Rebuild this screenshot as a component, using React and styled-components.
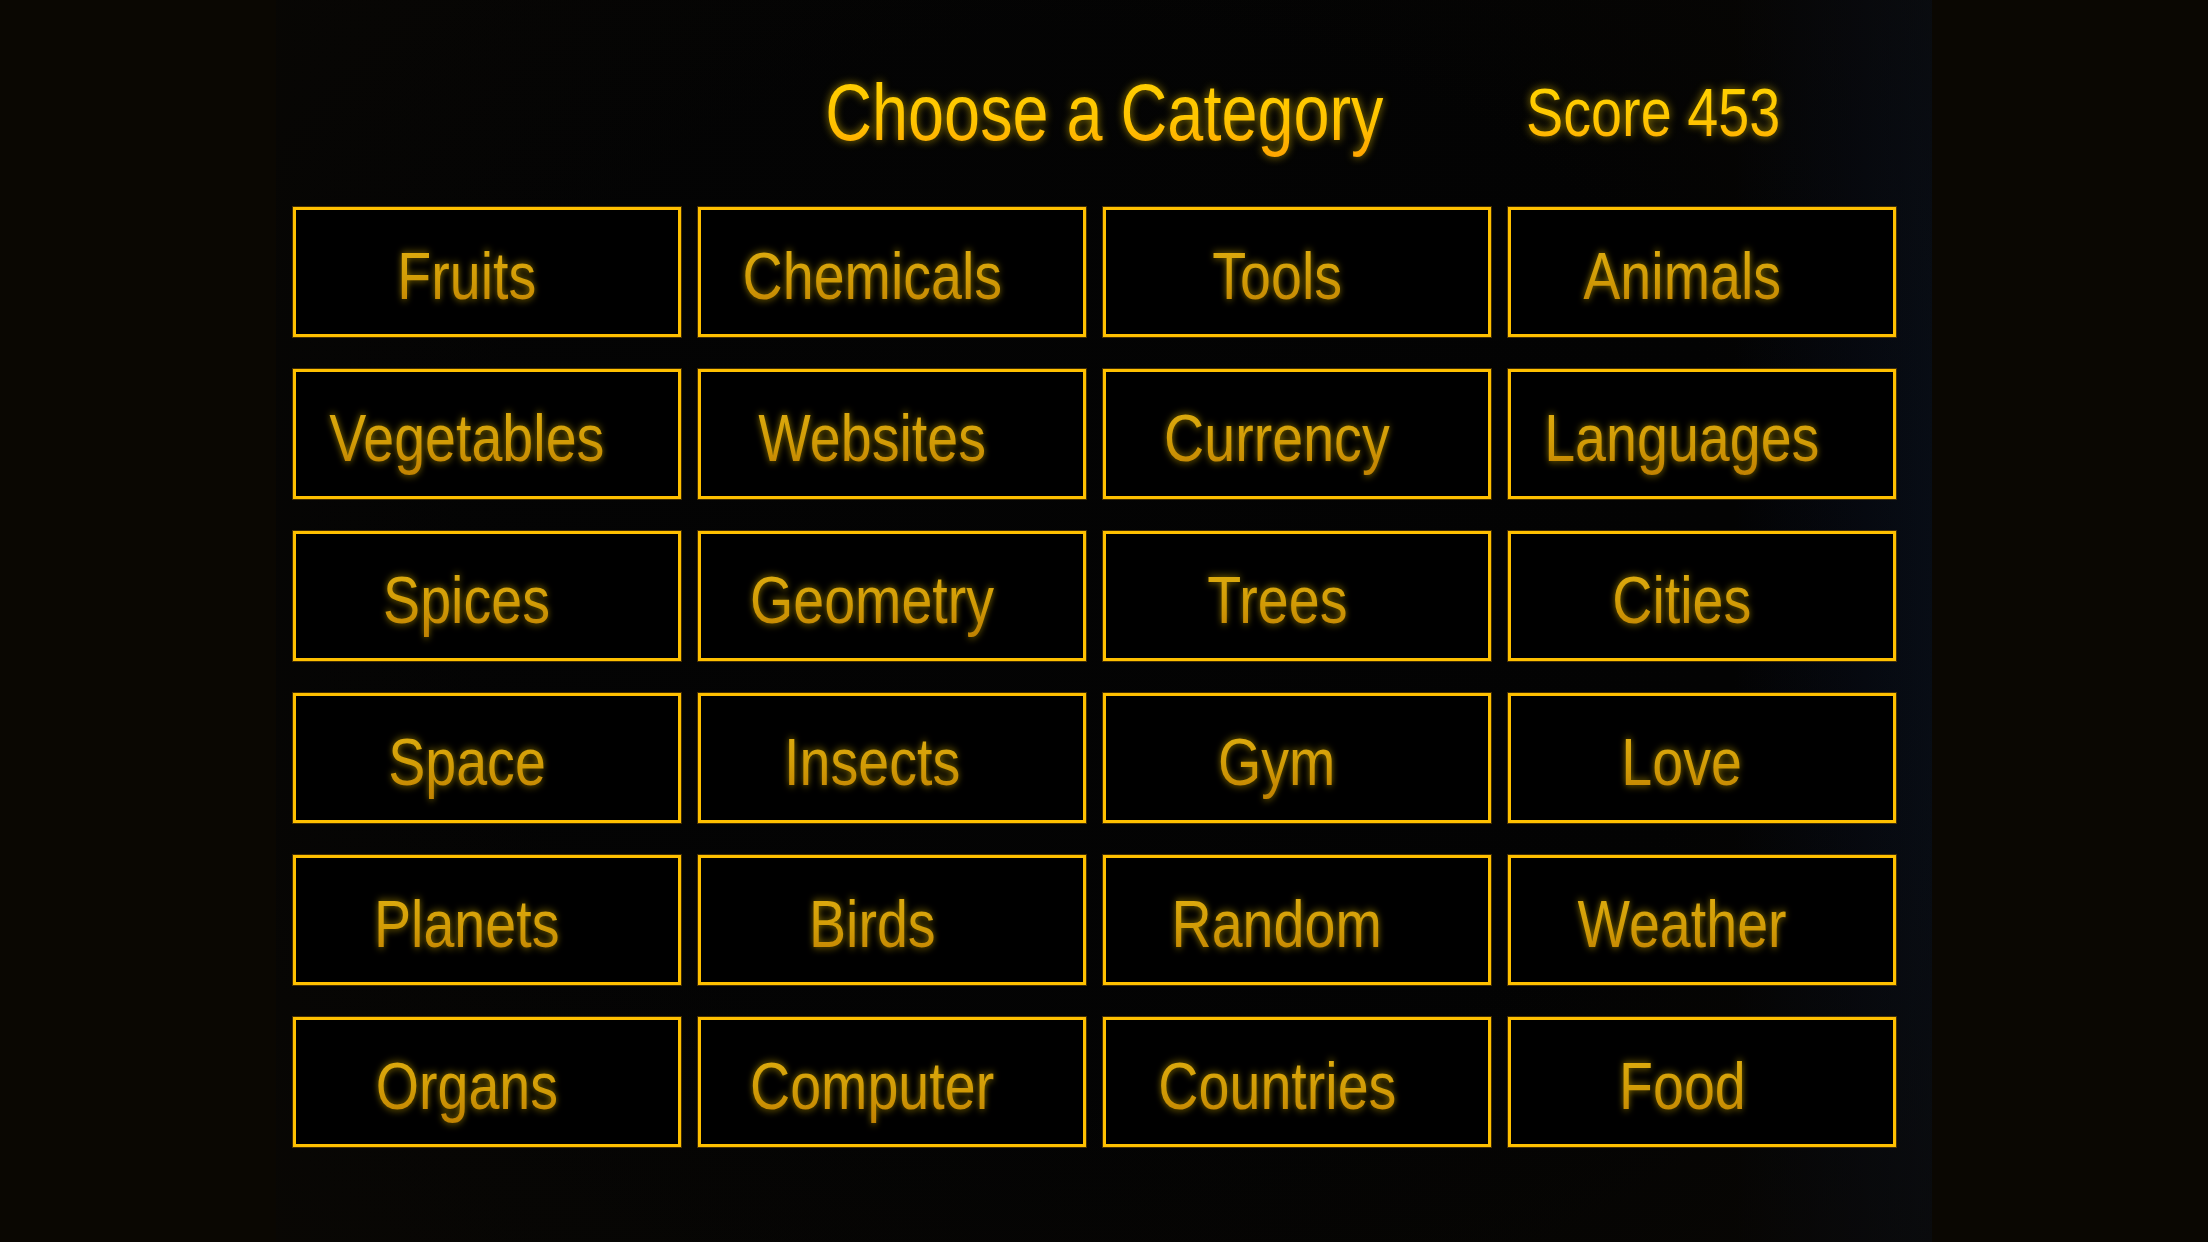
import React from "react";
import styled, { createGlobalStyle } from "styled-components";

const categories = [
    "Fruits", "Chemicals", "Tools", "Animals",
    "Vegetables", "Websites", "Currency", "Languages",
    "Spices", "Geometry", "Trees", "Cities",
    "Space", "Insects", "Gym", "Love",
    "Planets", "Birds", "Random", "Weather",
    "Organs", "Computer", "Countries", "Food",
];

const GlobalStyle = createGlobalStyle`
    html, body {
        margin: 0;
        padding: 0;
        background: #0a0702;
        font-family: "Liberation Sans", Arial, sans-serif;
    }
`;

const App = () => {
    return (
        <>
            <GlobalStyle />
            <Screen>
                <Stage>
                    <Header>
                        <span />
                        <Title>Choose a Category</Title>
                        <Score>Score 453</Score>
                    </Header>
                    <Grid>
                        {categories.map((name) => (
                            <Tile key={name}>
                                <Label>{name}</Label>
                            </Tile>
                        ))}
                    </Grid>
                </Stage>
            </Screen>
        </>
    );
};

const Screen = styled.div`
    width: 100vw;
    height: 100vh;
    display: flex;
    justify-content: center;
    background: #0a0702;
    overflow: hidden;
`;

const Stage = styled.div`
    width: 1656px;
    height: 1242px;
    box-sizing: border-box;
    padding: 0 36px 0 17px;
    background:
        radial-gradient(ellipse at 50% 45%, rgba(0, 0, 0, 0) 55%, rgba(12, 9, 4, 0.6) 100%),
        linear-gradient(to right, #040404 0%, #030303 88%, #050912 96%, #070e1a 100%);
`;

const Header = styled.div`
    display: grid;
    grid-template-columns: 1fr auto 1fr;
    align-items: start;
    padding-top: 73px;
    height: 134px;
    margin-left: -17px;
    margin-right: -36px;
`;

// gradient text: extra bottom padding keeps descenders inside the clipped background
const glowText = `
    line-height: 1;
    white-space: nowrap;
    padding-bottom: 0.22em;
    margin-bottom: -0.22em;
    -webkit-background-clip: text;
    background-clip: text;
    color: transparent;
`;

const Title = styled.h1`
    ${glowText}
    margin-top: 0;
    font-size: 79px;
    font-weight: normal;
    transform: scaleX(0.82);
    background-image: linear-gradient(to bottom, #ffd000 0%, #ffc400 50%, #ffab00 78%, #ffa000 100%);
    filter: drop-shadow(0 0 5px rgba(255, 214, 0, 0.6));
`;

const Score = styled.div`
    ${glowText}
    justify-self: start;
    margin-top: 5px;
    margin-left: 82px;
    font-size: 68px;
    transform: scaleX(0.82);
    transform-origin: left center;
    background-image: linear-gradient(to bottom, #ffd400 0%, #ffc600 50%, #ffae00 78%, #ffa400 100%);
    filter: drop-shadow(0 0 5px rgba(255, 214, 0, 0.6));
`;

const Grid = styled.div`
    display: grid;
    grid-template-columns: repeat(4, 388px);
    grid-auto-rows: 130px;
    column-gap: 17px;
    row-gap: 32px;
`;

const Tile = styled.div`
    box-sizing: border-box;
    display: flex;
    align-items: center;
    justify-content: center;
    padding: 6px 40px 0 0;
    background: #000;
    border: 3px solid #ffc000;
    box-shadow: 0 0 0 1px rgba(120, 80, 0, 0.55);
`;

const Label = styled.span`
    ${glowText}
    font-size: 67px;
    transform: scaleX(0.83);
    background-image: linear-gradient(to bottom, #dfae10 0%, #d29c06 45%, #c48602 78%, #bb7e00 100%);
    filter: drop-shadow(0 0 4px rgba(170, 140, 0, 0.85));
`;

export default App;
